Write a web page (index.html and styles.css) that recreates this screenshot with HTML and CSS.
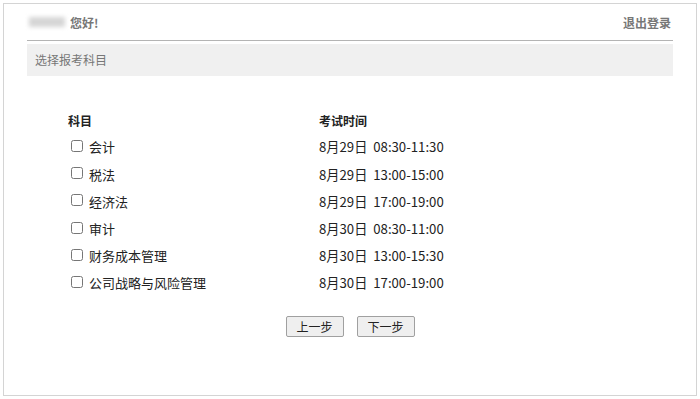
FILE: index.html
```
<!DOCTYPE html>
<html lang="zh-CN">

<head>
    <meta charset="UTF-8">
    <title>选择报考科目</title>
    <link rel="stylesheet" href="styles.css">
</head>

<body>
    <div class="frame">
        <div class="top">
            <div class="hello"><span class="name"></span>您好!</div>
            <a class="logout">退出登录</a>
        </div>
        <div class="bar">选择报考科目</div>

        <ul class="subjects">
            <li class="row head">
                <span class="col1">科目</span>
                <span class="col2">考试时间</span>
            </li>
            <li class="row">
                <label class="col1"><input type="checkbox"> 会计</label>
                <span class="col2">8月29日&nbsp;&nbsp;08:30-11:30</span>
            </li>
            <li class="row">
                <label class="col1"><input type="checkbox"> 税法</label>
                <span class="col2">8月29日&nbsp;&nbsp;13:00-15:00</span>
            </li>
            <li class="row">
                <label class="col1"><input type="checkbox"> 经济法</label>
                <span class="col2">8月29日&nbsp;&nbsp;17:00-19:00</span>
            </li>
            <li class="row">
                <label class="col1"><input type="checkbox"> 审计</label>
                <span class="col2">8月30日&nbsp;&nbsp;08:30-11:00</span>
            </li>
            <li class="row">
                <label class="col1"><input type="checkbox"> 财务成本管理</label>
                <span class="col2">8月30日&nbsp;&nbsp;13:00-15:30</span>
            </li>
            <li class="row">
                <label class="col1"><input type="checkbox"> 公司战略与风险管理</label>
                <span class="col2">8月30日&nbsp;&nbsp;17:00-19:00</span>
            </li>
        </ul>

        <div class="btns">
            <button class="btn">上一步</button>
            <button class="btn">下一步</button>
        </div>
    </div>
</body>

</html>
```

FILE: styles.css
```
* {
    margin: 0;
    padding: 0;
}

body {
    font-family: "Noto Sans CJK SC", "Liberation Sans", sans-serif;
    font-size: 13px;
    color: #222;
    background-color: #fff;
}

li {
    list-style-type: none;
}

.frame {
    width: 646px;
    height: 391px;
    margin: 3px;
    padding: 0 23px 0 23px;
    border: 1px solid #d4d4d4;
}

.top {
    height: 36px;
    display: flex;
    align-items: center;
    justify-content: space-between;
    border-bottom: 1px solid #b4b4b4;
    font-size: 12px;
    font-weight: bold;
    color: #777;
}

.top .hello {
    display: flex;
    align-items: center;
}

.top .name {
    display: inline-block;
    width: 36px;
    height: 10px;
    margin: 0 5px 0 2px;
    background-color: #d6d6d6;
    filter: blur(2px);
}

.top .logout {
    padding-right: 2px;
    cursor: pointer;
}

.bar {
    height: 32px;
    line-height: 32px;
    margin-top: 3px;
    padding-left: 8px;
    background-color: #f0f0f0;
    font-size: 12px;
    color: #777;
}

.subjects {
    padding: 31px 0 0 41px;
}

.subjects .row {
    display: flex;
    align-items: center;
    height: 27.2px;
}

.subjects .head {
    height: 26.4px;
    font-weight: bold;
}

.subjects .col1 {
    width: 251px;
    display: flex;
    align-items: center;
}

.subjects .col1 input {
    width: 12px;
    height: 12px;
    margin: 0 6px 0 3px;
    position: relative;
    top: -1px;
}

.subjects .col2 {
    font-size: 13.2px;
}

.subjects .head .col1,
.subjects .head .col2 {
    font-size: 12px;
}

.btns {
    display: flex;
    justify-content: center;
    gap: 13px;
    margin-top: 19px;
}

.btns .btn {
    width: 58px;
    height: 21px;
    font-family: inherit;
    font-size: 12px;
    color: #222;
    background-color: #efefef;
    border: 1px solid #a0a0a0;
    border-radius: 2px;
    cursor: pointer;
}
```
